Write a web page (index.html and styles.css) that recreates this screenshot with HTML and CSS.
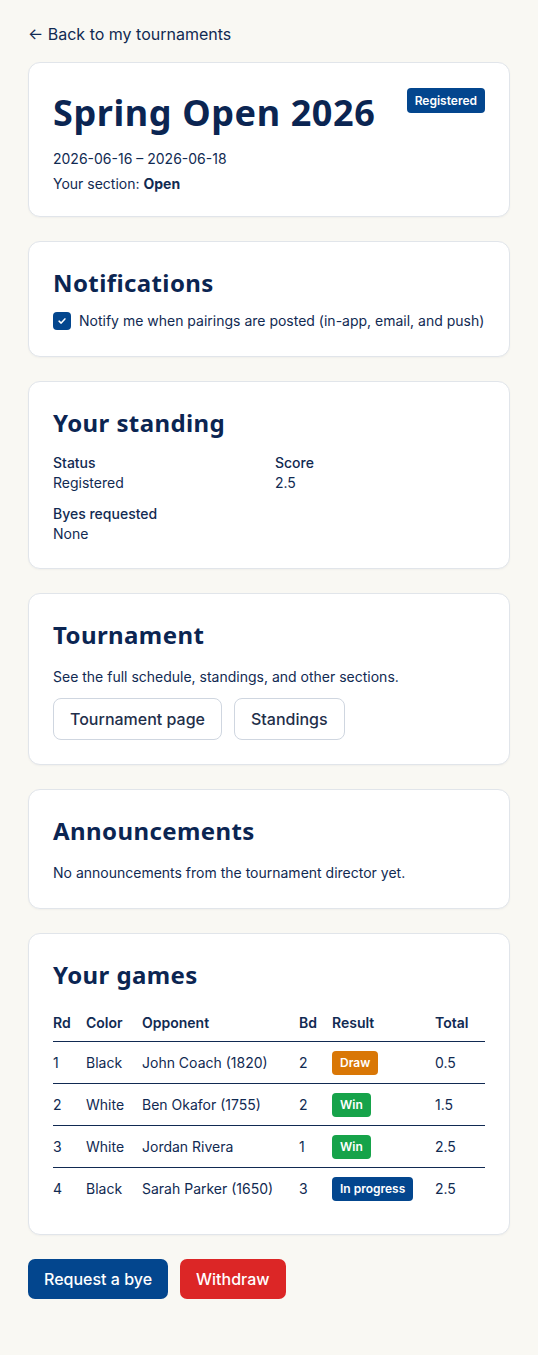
FILE: index.html
```html
<!DOCTYPE html>
<html lang="en">
<head>
<meta charset="utf-8">
<title>Spring Open 2026</title>
<link rel="stylesheet" href="styles.css">
</head>
<body>
<main class="page">
  <a class="back" href="#">← Back to my tournaments</a>

  <section class="card hero">
    <div class="hero-top">
      <h1>Spring Open 2026</h1>
      <span class="badge badge-blue">Registered</span>
    </div>
    <p class="meta">2026-06-16 – 2026-06-18</p>
    <p class="meta meta-2">Your section: <strong>Open</strong></p>
  </section>

  <section class="card">
    <h2>Notifications</h2>
    <label class="check">
      <span class="box"><svg viewBox="0 0 12 12" width="10" height="10"><path d="M2.5 6.2 L5 8.5 L9.5 3.5" fill="none" stroke="#fff" stroke-width="1.8" stroke-linecap="round" stroke-linejoin="round"/></svg></span>
      Notify me when pairings are posted (in-app, email, and push)
    </label>
  </section>

  <section class="card">
    <h2>Your standing</h2>
    <dl class="stats">
      <div><dt>Status</dt><dd>Registered</dd></div>
      <div><dt>Score</dt><dd>2.5</dd></div>
      <div><dt>Byes requested</dt><dd>None</dd></div>
    </dl>
  </section>

  <section class="card">
    <h2>Tournament</h2>
    <p class="text">See the full schedule, standings, and other sections.</p>
    <div class="links">
      <a class="btn-outline" href="#">Tournament page</a>
      <a class="btn-outline" href="#">Standings</a>
    </div>
  </section>

  <section class="card">
    <h2>Announcements</h2>
    <p class="text">No announcements from the tournament director yet.</p>
  </section>

  <section class="card">
    <h2>Your games</h2>
    <table class="games">
      <thead>
        <tr><th class="c-rd">Rd</th><th class="c-color">Color</th><th class="c-opp">Opponent</th><th class="c-bd">Bd</th><th class="c-res">Result</th><th>Total</th></tr>
      </thead>
      <tbody>
        <tr><td>1</td><td>Black</td><td>John Coach (1820)</td><td>2</td><td><span class="badge badge-orange">Draw</span></td><td>0.5</td></tr>
        <tr><td>2</td><td>White</td><td>Ben Okafor (1755)</td><td>2</td><td><span class="badge badge-green">Win</span></td><td>1.5</td></tr>
        <tr><td>3</td><td>White</td><td>Jordan Rivera</td><td>1</td><td><span class="badge badge-green">Win</span></td><td>2.5</td></tr>
        <tr><td>4</td><td>Black</td><td>Sarah Parker (1650)</td><td>3</td><td><span class="badge badge-blue">In progress</span></td><td>2.5</td></tr>
      </tbody>
    </table>
  </section>

  <div class="actions">
    <button class="btn btn-primary">Request a bye</button>
    <button class="btn btn-danger">Withdraw</button>
  </div>
</main>
</body>
</html>
```

FILE: styles.css
```css
* { box-sizing: border-box; }
html, body { margin: 0; padding: 0; }
body {
  background: #f9f8f3;
  font-family: Inter, "Liberation Sans", sans-serif;
  color: #112a52;
  -webkit-font-smoothing: antialiased;
}
.page {
  padding: 24px 28px 56px;
  display: flex;
  flex-direction: column;
  gap: 24px;
}
.back {
  color: #112a52;
  text-decoration: none;
  font-size: 16px;
  line-height: 20px;
  margin-bottom: -6px;
}
.card {
  background: #fff;
  border: 1px solid #e1e5ea;
  border-radius: 12px;
  padding: 24px;
  box-shadow: 0 1px 2px rgba(15, 30, 60, 0.04);
}
h1, h2 {
  font-family: "Noto Sans", Inter, sans-serif;
  color: #0b2552;
  margin: 0;
}
h1 {
  font-size: 36px;
  line-height: 46px;
  font-weight: 700;
  letter-spacing: 0.6px;
}
h2 {
  font-size: 24px;
  line-height: 34px;
  font-weight: 700;
  letter-spacing: 0.4px;
  margin-bottom: 14px;
}
.hero { padding-top: 27px; padding-bottom: 20px; }
.hero-top {
  display: flex;
  justify-content: space-between;
  align-items: flex-start;
  margin-bottom: 11px;
}
.meta {
  margin: 0;
  font-size: 14px;
  line-height: 24px;
}
.meta-2 { margin-top: 1px; }
.meta strong { font-weight: 700; }
.badge {
  display: inline-block;
  color: #fff;
  font-size: 12px;
  font-weight: 600;
  line-height: 16px;
  padding: 4px 8px;
  border-radius: 4px;
  white-space: nowrap;
}
.hero .badge { margin-top: -2px; padding-top: 5px; padding-bottom: 4px; }
.badge-blue { background: #03468e; }
.badge-orange { background: #d97706; }
.badge-green { background: #16a34a; }
.check {
  display: flex;
  align-items: center;
  gap: 8px;
  font-size: 14px;
  line-height: 22px;
  margin-top: -4px;
}
.box {
  width: 18px;
  height: 18px;
  border-radius: 4px;
  background: #03468e;
  display: inline-flex;
  align-items: center;
  justify-content: center;
}
.stats {
  margin: -1px 0 0;
  display: grid;
  grid-template-columns: 1fr 1fr;
  row-gap: 11px;
  column-gap: 12px;
}
.stats dt {
  font-size: 14px;
  font-weight: 500;
  line-height: 20px;
}
.stats dd {
  margin: 0;
  font-size: 14px;
  line-height: 20px;
}
.text {
  margin: 0;
  font-size: 14px;
  line-height: 22px;
}
.links {
  display: flex;
  gap: 12px;
  margin-top: 10px;
}
.btn-outline {
  display: inline-block;
  border: 1px solid #cfd6e0;
  border-radius: 8px;
  padding: 10px 16px;
  font-size: 16px;
  line-height: 20px;
  color: #1f2f4a;
  text-decoration: none;
  font-weight: 500;
}
.games {
  width: 100%;
  border-collapse: collapse;
  font-size: 14px;
  margin-top: 21px;
}
.games th {
  text-align: left;
  font-size: 14px;
  font-weight: 600;
  padding: 0 0 8px;
  line-height: 20px;
  border-bottom: 1px solid #112a52;
}
.games td {
  padding: 0;
  height: 42px;
  line-height: 20px;
  vertical-align: middle;
}
.games tbody tr + tr td { border-top: 1px solid #112a52; }
.c-rd { width: 33px; }
.c-color { width: 56px; }
.c-opp { width: 157px; }
.c-bd { width: 33px; }
.c-res { width: 103px; }
.actions {
  display: flex;
  gap: 12px;
}
.btn {
  font-family: Inter, sans-serif;
  font-size: 16px;
  line-height: 20px;
  padding: 10px 16px;
  border-radius: 7px;
  border: 0;
  color: #fff;
  font-weight: 500;
}
.btn-primary { background: #03468e; }
.btn-danger { background: #dc2626; }
```
